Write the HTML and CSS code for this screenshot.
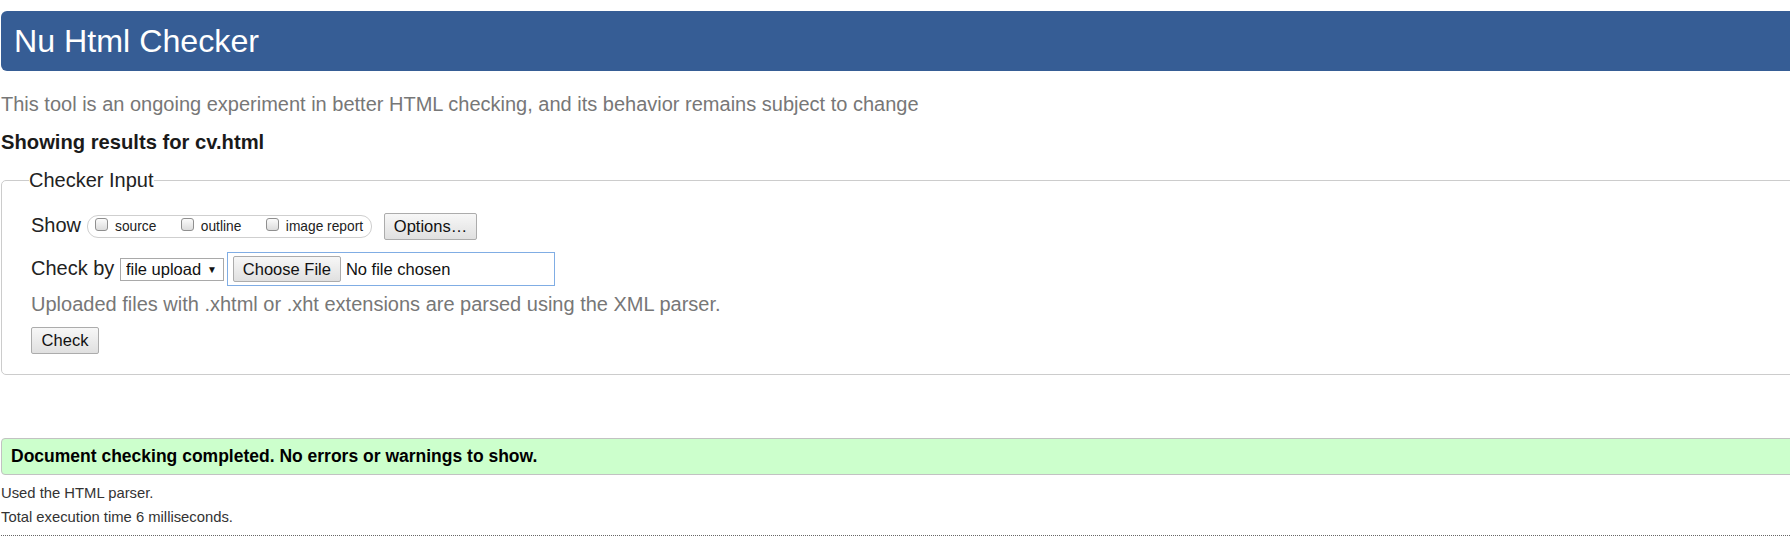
FILE: index.html
```html
<!DOCTYPE html>
<html lang="en">
<head>
<meta charset="utf-8">
<title>Nu Html Checker</title>
<link rel="stylesheet" href="styles.css">
</head>
<body>
<h1 class="title">Nu Html Checker</h1>
<p class="intro">This tool is an ongoing experiment in better HTML checking, and its behavior remains subject to change</p>
<p class="showing">Showing results for cv.html</p>
<form class="form">
  <fieldset class="checker">
    <legend class="legend">Checker Input</legend>
    <div class="rows">
      <div class="row row-show">
        <span class="label">Show</span>
        <span class="pill">
          <label class="opt"><input type="checkbox" class="cb"><span>source</span></label>
          <label class="opt"><input type="checkbox" class="cb"><span>outline</span></label>
          <label class="opt"><input type="checkbox" class="cb"><span>image report</span></label>
        </span>
        <button type="button" class="btn btn-options">Options…</button>
      </div>
      <div class="row row-check">
        <span class="label">Check by</span>
        <span class="select-wrap"><select class="select"><option>file upload</option></select></span>
        <span class="filebox"><button type="button" class="btn btn-file">Choose File</button><span class="nofile">No file chosen</span></span>
      </div>
      <p class="hint">Uploaded files with .xhtml or .xht extensions are parsed using the XML parser.</p>
      <button type="button" class="btn btn-check">Check</button>
    </div>
  </fieldset>
</form>
<p class="success">Document checking completed. No errors or warnings to show.</p>
<p class="stats">Used the HTML parser.</p>
<p class="stats">Total execution time 6 milliseconds.</p>
<hr class="rule">
</body>
</html>
```

FILE: styles.css
```css
html, body {
  margin: 0;
  padding: 0;
  overflow: hidden;
  background: #fff;
}
body {
  font-family: "Liberation Sans", Arial, sans-serif;
  color: #222;
  padding-left: 1px;
}
.title {
  margin: 11px -40px 0 0;
  height: 60px;
  box-sizing: border-box;
  padding: 0 13px;
  background: #365d95;
  color: #fff;
  font-size: 32.2px;
  line-height: 60px;
  font-weight: normal;
  border-radius: 6px;
}
.intro {
  margin: 21px 0 0;
  font-size: 20px;
  line-height: 24px;
  color: #777;
}
.showing {
  margin: 14px 0 0;
  font-size: 20.2px;
  line-height: 24px;
  font-weight: bold;
  color: #1a1a1a;
}
.form {
  margin: 0;
}
.checker {
  margin: 13px -40px 0 0;
  padding: 20px 0 20px 27px;
  border: 1px solid #cccccc;
  border-radius: 5px;
  min-width: 0;
}
.legend {
  padding: 0;
  font-size: 20px;
  line-height: 26px;
  color: #222;
}
.rows {
  padding-left: 2px;
}
.row {
  display: flex;
  align-items: center;
}
.row-show {
  height: 27px;
}
.row-check {
  height: 34px;
  margin-top: 12px;
}
.label {
  font-size: 20px;
  line-height: 24px;
  margin-bottom: 3px;
}
.pill {
  display: flex;
  align-items: center;
  height: 23px;
  box-sizing: border-box;
  margin-left: 6px;
  padding: 0 8px 0 7px;
  border: 1px solid #cfcfcf;
  border-radius: 11px;
  font-size: 13.75px;
  line-height: 16px;
  color: #222;
}
.opt {
  display: flex;
  align-items: center;
}
.opt + .opt {
  margin-left: 24.5px;
}
.cb {
  appearance: none;
  -webkit-appearance: none;
  width: 13px;
  height: 13px;
  margin: 0 7px 5px 0;
  box-sizing: border-box;
  border: 1px solid #8f8f8f;
  border-radius: 3px;
  background: linear-gradient(#fbfbfb, #dcdcdc);
}
.btn {
  font-family: "Liberation Sans", Arial, sans-serif;
  font-size: 16.5px;
  color: #111;
  background: linear-gradient(#f7f7f7, #e0e0e0);
  border: 1px solid #acacac;
  border-radius: 2px;
  padding: 0;
  box-sizing: border-box;
}
.btn-options {
  margin-left: 12px;
  width: 93px;
  height: 27px;
}
.select-wrap {
  position: relative;
  margin-left: 5.5px;
  display: block;
}
.select-wrap::after {
  content: "\25BC";
  position: absolute;
  right: 7px;
  top: 6px;
  font-size: 10px;
  line-height: 12px;
  color: #111;
  pointer-events: none;
}
.select {
  appearance: none;
  -webkit-appearance: none;
  display: block;
  width: 104px;
  height: 23px;
  box-sizing: border-box;
  border: 1px solid #a9a9a9;
  border-radius: 0;
  background: #fff;
  padding: 0 0 0 5px;
  font-family: "Liberation Sans", Arial, sans-serif;
  font-size: 16.5px;
  color: #111;
}
.filebox {
  display: flex;
  align-items: center;
  margin-left: 3px;
  width: 328px;
  height: 34px;
  box-sizing: border-box;
  border: 1px solid #80ade4;
  padding-left: 5px;
  font-size: 16.5px;
  color: #111;
}
.btn-file {
  width: 108px;
  height: 26px;
}
.nofile {
  margin-left: 5px;
}
.hint {
  margin: 6px 0 0;
  font-size: 20px;
  line-height: 24px;
  color: #777;
}
.btn-check {
  display: block;
  margin-top: 11px;
  width: 68px;
  height: 27px;
}
.success {
  margin: 63px -40px 0 0;
  height: 37px;
  box-sizing: border-box;
  padding-left: 9px;
  background: #ccffcc;
  border: 1px solid #c2c2c2;
  border-radius: 4px;
  font-size: 17.5px;
  line-height: 35px;
  font-weight: bold;
  color: #000;
}
.stats {
  margin: 0;
  font-size: 14.8px;
  line-height: 24px;
  color: #333;
}
.success + .stats {
  margin-top: 6px;
}
.rule {
  margin: 6px -40px 0 0;
  border: 0;
  border-top: 1px dotted #666;
  height: 0;
}
```
